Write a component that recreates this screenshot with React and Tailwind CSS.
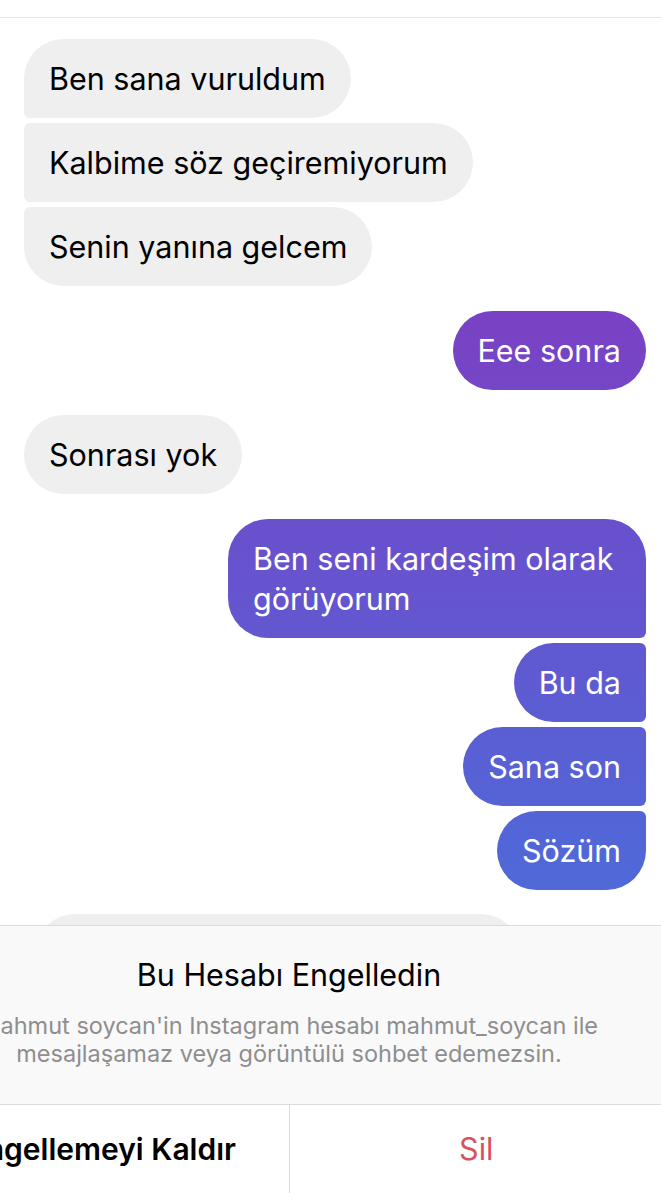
import React from "react";

const purple =
  "bg-fixed bg-[linear-gradient(180deg,#7b40c4_300px,#4e6ad9_900px)] text-white";

const Bubble = ({ text, side, shape, width = "whitespace-nowrap" }) => {
  const base =
    side === "left"
      ? "bg-[#efefef] text-black self-start"
      : `${purple} self-end`;
  return (
    <div
      className={`${base} ${shape} ${width} px-[25px] pt-[20px] pb-[19px] text-[30.5px] leading-[40px]`}
    >
      {text}
    </div>
  );
};

const App = () => {
  return (
    <div
      className="w-[661px] h-[1193px] overflow-hidden bg-white flex flex-col"
      style={{ fontFamily: "Inter, 'Liberation Sans', sans-serif" }}
    >
      <div className="h-[18px] shrink-0 border-b border-[#e3e3e3]" />

      <div className="flex-1 overflow-hidden pl-[24px] pr-[15px] pt-[21px] flex flex-col">
        <div className="flex flex-col gap-[5px]">
          <Bubble side="left" text="Ben sana vuruldum" shape="rounded-[40px] rounded-bl-[6px]" />
          <Bubble side="left" text="Kalbime söz geçiremiyorum" shape="rounded-[40px] rounded-l-[6px]" />
          <Bubble side="left" text="Senin yanına gelcem" shape="rounded-[40px] rounded-tl-[6px]" />
        </div>

        <div className="flex flex-col mt-[25px]">
          <Bubble side="right" text="Eee sonra" shape="rounded-[40px]" />
        </div>

        <div className="flex flex-col mt-[25px]">
          <Bubble side="left" text="Sonrası yok" shape="rounded-[40px]" />
        </div>

        <div className="flex flex-col gap-[5px] mt-[25px]">
          <Bubble
            side="right"
            text="Ben seni kardeşim olarak görüyorum"
            shape="rounded-[40px] rounded-br-[6px]"
            width="w-[418px]"
          />
          <Bubble side="right" text="Bu da" shape="rounded-[40px] rounded-r-[6px]" />
          <Bubble side="right" text="Sana son" shape="rounded-[40px] rounded-r-[6px]" />
          <Bubble side="right" text="Sözüm" shape="rounded-[40px] rounded-tr-[6px]" />
        </div>

        <div className="mt-[24px] ml-[11px] w-[486px] h-[80px] shrink-0 bg-[#efefef] rounded-[40px]" />
      </div>

      <div className="shrink-0 w-[748px] ml-[-85px] bg-[#f9f9f9] border-t border-[#dbdbdb]">
        <div className="pt-[31px] pb-[36px] text-center">
          <p className="text-[30.5px] leading-[36px] text-black">Bu Hesabı Engelledin</p>
          <p className="mt-[19px] text-[23.5px] leading-[28px] text-[#8e8e8e]">
            mahmut soycan'in Instagram hesabı mahmut_soycan ile
            <br />
            mesajlaşamaz veya görüntülü sohbet edemezsin.
          </p>
        </div>
        <div className="flex h-[89px] border-t border-[#dbdbdb] bg-white">
          <div className="flex-1 flex items-center justify-center border-r border-[#dbdbdb] text-[30px] font-semibold text-black">
            Engellemeyi Kaldır
          </div>
          <div className="flex-1 flex items-center justify-center text-[30.5px] text-[#d6525c]">
            Sil
          </div>
        </div>
      </div>
    </div>
  );
};

export default App;
